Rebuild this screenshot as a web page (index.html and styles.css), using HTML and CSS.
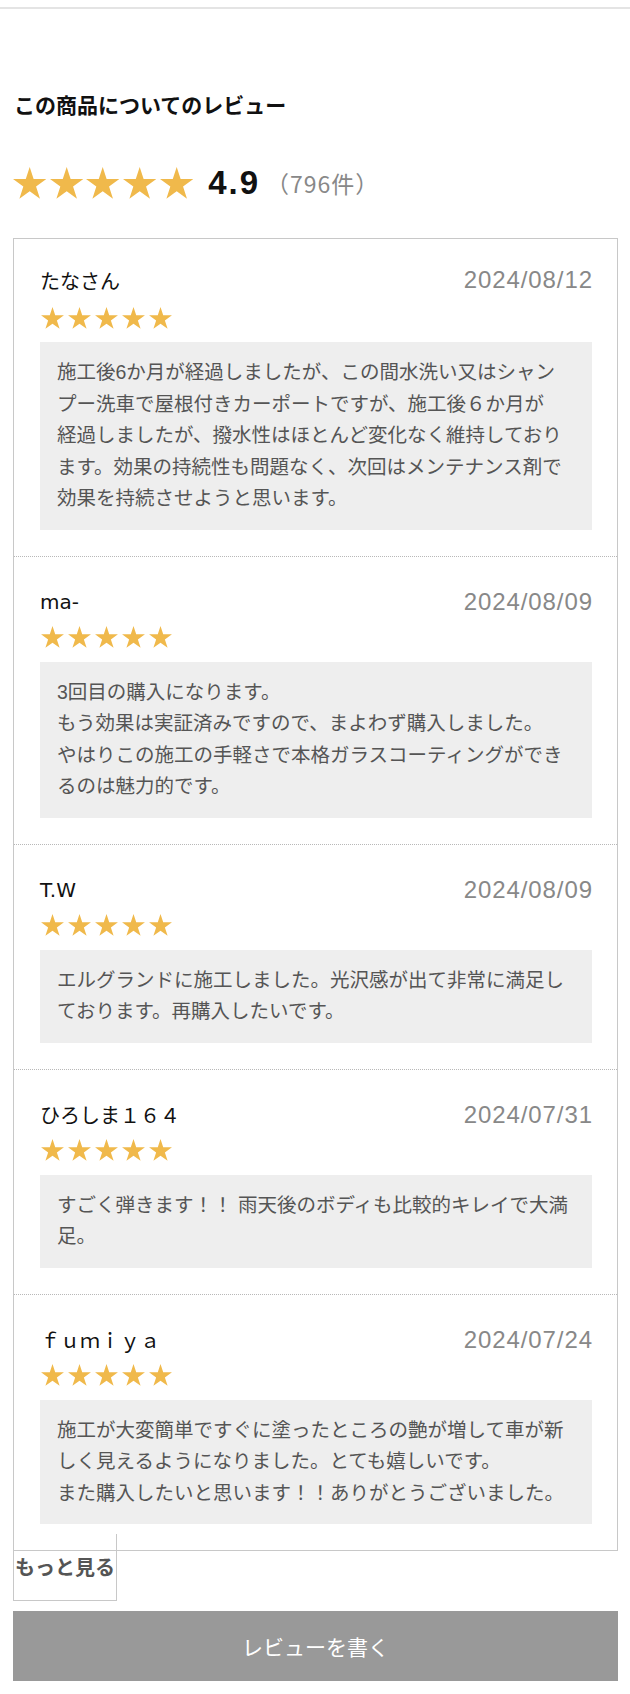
FILE: index.html
```html
<!DOCTYPE html>
<html lang="ja">
<head>
    <meta charset="UTF-8">
    <meta name="viewport" content="width=device-width, initial-scale=1.0">
    <title>この商品についてのレビュー</title>
    <link rel="stylesheet" href="styles.css">
</head>
<body>
    <!-- 星アイコン -->
    <svg class="sprite" xmlns="http://www.w3.org/2000/svg">
        <symbol id="star" viewBox="0 0 100 96">
            <polygon points="50,0 61.8,36.3 100,36.3 69.1,58.8 80.9,95.2 50,72.7 19.1,95.2 30.9,58.8 0,36.3 38.2,36.3"/>
        </symbol>
    </svg>

    <div class="top-rule"></div>

    <section class="reviews">
        <h2 class="reviews-title">この商品についてのレビュー</h2>

        <div class="summary">
            <div class="stars stars-lg">
                <svg class="star"><use href="#star"/></svg>
                <svg class="star"><use href="#star"/></svg>
                <svg class="star"><use href="#star"/></svg>
                <svg class="star"><use href="#star"/></svg>
                <svg class="star"><use href="#star"/></svg>
            </div>
            <span class="summary-score">4.9</span>
            <span class="summary-count">（796件）</span>
        </div>

        <ul class="review-list">
            <li class="review">
                <div class="review-head">
                    <span class="review-name">たなさん</span>
                    <span class="review-date">2024/08/12</span>
                </div>
                <div class="stars stars-sm">
                    <svg class="star"><use href="#star"/></svg>
                    <svg class="star"><use href="#star"/></svg>
                    <svg class="star"><use href="#star"/></svg>
                    <svg class="star"><use href="#star"/></svg>
                    <svg class="star"><use href="#star"/></svg>
                </div>
                <p class="review-body">施工後6か月が経過しましたが、この間水洗い又はシャンプー洗車で屋根付きカーポートですが、施工後６か月が<br>経過しましたが、撥水性はほとんど変化なく維持しております。効果の持続性も問題なく、次回はメンテナンス剤で効果を持続させようと思います。</p>
            </li>
            <li class="review">
                <div class="review-head">
                    <span class="review-name">ma-</span>
                    <span class="review-date">2024/08/09</span>
                </div>
                <div class="stars stars-sm">
                    <svg class="star"><use href="#star"/></svg>
                    <svg class="star"><use href="#star"/></svg>
                    <svg class="star"><use href="#star"/></svg>
                    <svg class="star"><use href="#star"/></svg>
                    <svg class="star"><use href="#star"/></svg>
                </div>
                <p class="review-body">3回目の購入になります。<br>もう効果は実証済みですので、まよわず購入しました。<br>やはりこの施工の手軽さで本格ガラスコーティングができるのは魅力的です。</p>
            </li>
            <li class="review">
                <div class="review-head">
                    <span class="review-name">T.W</span>
                    <span class="review-date">2024/08/09</span>
                </div>
                <div class="stars stars-sm">
                    <svg class="star"><use href="#star"/></svg>
                    <svg class="star"><use href="#star"/></svg>
                    <svg class="star"><use href="#star"/></svg>
                    <svg class="star"><use href="#star"/></svg>
                    <svg class="star"><use href="#star"/></svg>
                </div>
                <p class="review-body">エルグランドに施工しました。光沢感が出て非常に満足しております。再購入したいです。</p>
            </li>
            <li class="review">
                <div class="review-head">
                    <span class="review-name">ひろしま１６４</span>
                    <span class="review-date">2024/07/31</span>
                </div>
                <div class="stars stars-sm">
                    <svg class="star"><use href="#star"/></svg>
                    <svg class="star"><use href="#star"/></svg>
                    <svg class="star"><use href="#star"/></svg>
                    <svg class="star"><use href="#star"/></svg>
                    <svg class="star"><use href="#star"/></svg>
                </div>
                <p class="review-body">すごく弾きます！！ 雨天後のボディも比較的キレイで大満足。</p>
            </li>
            <li class="review">
                <div class="review-head">
                    <span class="review-name">ｆｕｍｉｙａ</span>
                    <span class="review-date">2024/07/24</span>
                </div>
                <div class="stars stars-sm">
                    <svg class="star"><use href="#star"/></svg>
                    <svg class="star"><use href="#star"/></svg>
                    <svg class="star"><use href="#star"/></svg>
                    <svg class="star"><use href="#star"/></svg>
                    <svg class="star"><use href="#star"/></svg>
                </div>
                <p class="review-body">施工が大変簡単ですぐに塗ったところの艶が増して車が新しく見えるようになりました。とても嬉しいです。<br>また購入したいと思います！！ありがとうございました。</p>
            </li>
        </ul>

        <button class="more-btn" type="button">もっと見る</button>
        <button class="write-btn" type="button">レビューを書く</button>
    </section>
</body>
</html>
```

FILE: styles.css
```css
* {
    margin: 0;
    padding: 0;
    box-sizing: border-box;
}

body {
    background: #fff;
    font-family: "Liberation Sans", "Noto Sans CJK JP", sans-serif;
    color: #111;
}

.sprite {
    display: none;
}

/* 上部の区切り線 */
.top-rule {
    margin-top: 7px;
    border-top: 2px solid #e4e4e4;
}

.reviews {
    padding: 0 12px 14px 13px;
}

.reviews-title {
    margin-top: 80px;
    font-family: "Noto Sans CJK JP", sans-serif;
    font-size: 21px;
    font-weight: bold;
    line-height: 30px;
    color: #111;
    padding-left: 1px;
}

/* 総合評価 */
.summary {
    display: flex;
    align-items: center;
    height: 34px;
    margin-top: 47px;
}

.stars {
    display: flex;
}

.star {
    fill: #f0b94b;
}

.stars-lg {
    gap: 3.3px;
}

.stars-lg .star {
    width: 33.4px;
    height: 32px;
}

.summary-score {
    margin-left: 15px;
    font-size: 33px;
    font-weight: bold;
    letter-spacing: 2px;
    color: #111;
}

.summary-count {
    margin-left: 6px;
    font-family: "Noto Sans CJK JP", sans-serif;
    font-size: 23px;
    letter-spacing: 1px;
    color: #888;
}

/* レビュー一覧 */
.review-list {
    list-style: none;
    margin-top: 38px;
    border: 1px solid #c8c8c8;
}

.review {
    padding: 26px 25px 26px 26px;
}

.review + .review {
    padding-top: 30px;
    border-top: 1px dotted #b8b8b8;
}

.review-head {
    display: flex;
    justify-content: space-between;
    align-items: center;
    height: 30px;
}

.review-name {
    font-family: "DejaVu Sans", "Noto Sans CJK JP", sans-serif;
    font-size: 20px;
    color: #111;
}

.review-date {
    font-size: 24px;
    letter-spacing: 0.9px;
    color: #888;
    margin-right: -0.9px;
}

.stars-sm {
    margin-top: 11.5px;
    gap: 4px;
    padding-left: 1px;
}

.review + .review .stars-sm {
    margin-top: 9.5px;
}

.stars-sm .star {
    width: 23px;
    height: 22px;
}

.review-body {
    margin-top: 13.5px;
    padding: 15px 20px 15px 17px;
    background: #eee;
    font-size: 19.5px;
    line-height: 31.5px;
    color: #555;
}

/* ボタン */
.more-btn {
    display: block;
    width: 104px;
    margin-top: -17.5px;
    padding: 18px 0;
    background: transparent;
    border: 1px solid #c8c8c8;
    border-top: none;
    font-family: "Noto Sans CJK JP", sans-serif;
    font-size: 20px;
    font-weight: bold;
    line-height: 30px;
    color: #555;
    text-align: center;
}

.write-btn {
    display: block;
    width: 100%;
    height: 70px;
    margin-top: 10px;
    background: #999;
    border: none;
    font-family: "Noto Sans CJK JP", sans-serif;
    font-size: 21px;
    color: #fff;
    cursor: pointer;
}
```
